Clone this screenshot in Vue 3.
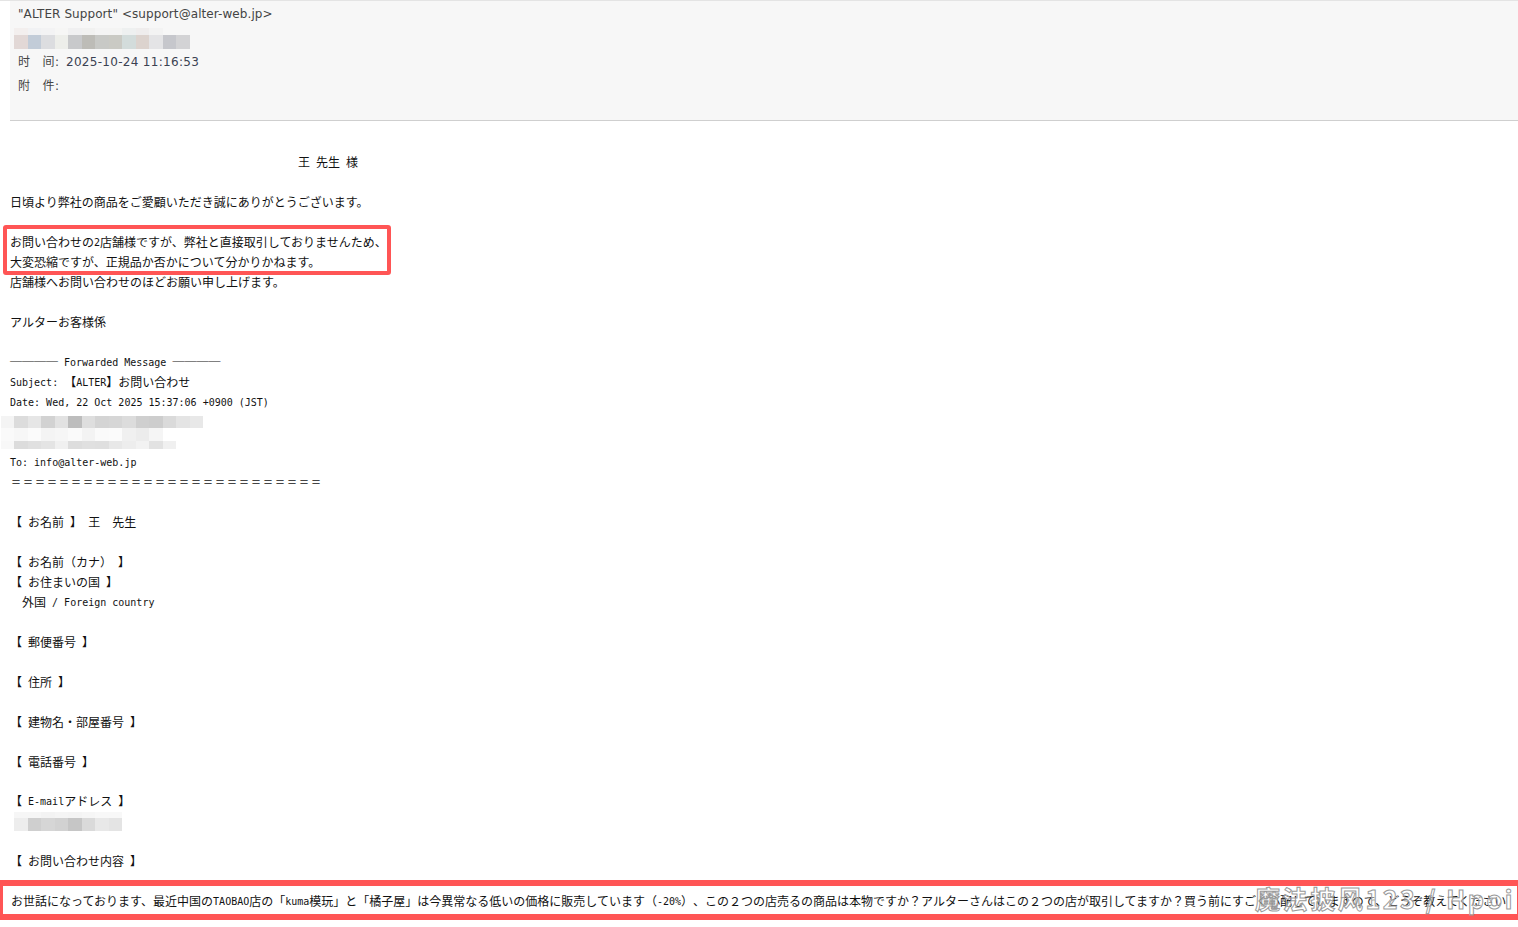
<script setup>
const mk = (s) => (s.match(/[\x00-\x7f]+|[^\x00-\x7f]+/g) || []).map((t) => ({ t, lat: /^[\x00-\x7f]/.test(t) }))

const block1 = [
  '',
  '日頃より弊社の商品をご愛顧いただき誠にありがとうございます。',
  '',
  'お問い合わせの2店舗様ですが、弊社と直接取引しておりませんため、',
  '大変恐縮ですが、正規品か否かについて分かりかねます。',
  '店舗様へお問い合わせのほどお願い申し上げます。',
  '',
  'アルターお客様係',
  '',
  '──── Forwarded Message ────',
  'Subject: 【ALTER】お問い合わせ',
  'Date: Wed, 22 Oct 2025 15:37:06 +0900 (JST)',
].map(mk)

const block2 = [
  'To: info@alter-web.jp',
  '＝'.repeat(26),
  '',
  '【 お名前 】 王　先生',
  '',
  '【 お名前（カナ） 】',
  '【 お住まいの国 】',
  '  外国 / Foreign country',
  '',
  '【 郵便番号 】',
  '',
  '【 住所 】',
  '',
  '【 建物名・部屋番号 】',
  '',
  '【 電話番号 】',
  '',
  '【 E-mailアドレス 】',
].map(mk)

const block3 = ['', '【 お問い合わせ内容 】', ''].map(mk)

const greeting = mk('王 先生 様')
const inquiry = mk(
  'お世話になっております、最近中国のTAOBAO店の「kuma模玩」と「橘子屋」は今異常なる低いの価格に販売しています（-20%）、この２つの店売るの商品は本物ですか？アルターさんはこの２つの店が取引してますか？買う前にすごく心配していますので、どうぞ教えてください'
)

const headMosaic = [
  { cls: 'r7', cells: ['#f3efee', '#f1f2f4', '#f3f3f4', '#f6f6f5', '#f0f0f1', '#f1f1f0', '#f4f4f4', '#f4f4f3', '#eef0f0', '#efeded', '#f3f3f3'] },
  { cls: 'r14', cells: ['#e2d8d6', '#c2ccd8', '#dcdde0', '#edeeea', '#c8c9cb', '#bdbcb7', '#c8c9c6', '#cacac4', '#d3dcdb', '#dcd3ce', '#e4e4e6', '#c6c7cc', '#d3d3d5'] },
]
const fromMosaic = [
  { cls: 'r12', cells: ['#f4f4f4', '#dcdcdc', '#e6e6e6', '#d2d2d2', '#e2e2e2', '#bdbdbd', '#dedede', '#d4d4d4', '#d6d6d6', '#dcdcdc', '#cfcfcf', '#cdcdcd', '#dadada', '#e4e4e4', '#e8e8e8'] },
  { cls: 'r13', cells: ['#fafafa', '#f7f7f7', '#fbfbfb', '#f4f4f4', '#f6f6f6', '#fafafa', '#f3f3f3', '#fafafa', '#fbfbfb', '#f0f0f0', '#ececec', '#f5f5f5'] },
  { cls: 'r8', cells: ['#f8f8f8', '#dcdcdc', '#e0e0e0', '#e4e4e4', '#f0f0f0', '#dddddd', '#e0e0e0', '#dfdfdf', '#e8e8e8', '#ededed', '#f2f2f2', '#e2e2e2', '#f0f0f0'] },
]
const mailMosaic = [
  { cls: 'r6', cells: ['#f6f6f6', '#f6f6f6', '#f3f3f3', '#f5f5f5', '#f4f4f4', '#f6f6f6', '#f8f8f8', '#f8f8f8'] },
  { cls: 'r13', cells: ['#ededed', '#cfcfcf', '#d6d6d6', '#d2d2d2', '#c6c6c6', '#dadada', '#e8e8e8', '#e4e4e4'] },
]
</script>

<template>
  <div class="page">
    <header class="head">
      <div class="head-row sender">"ALTER Support" &lt;support@alter-web.jp&gt;</div>
      <div class="mosaic head-mosaic">
        <div v-for="(row, i) in headMosaic" :key="i" class="m-row" :class="row.cls">
          <i v-for="(c, j) in row.cells" :key="j" :style="{ background: c }"></i>
        </div>
      </div>
      <div class="head-row"><span class="label">时&emsp;间:</span><span class="value">2025-10-24 11:16:53</span></div>
      <div class="head-row"><span class="label">附&emsp;件:</span></div>
    </header>

    <main class="mail">
      <p class="line greeting"><span v-for="(s, i) in greeting" :key="i" :class="{ lat: s.lat }">{{ s.t }}</span></p>
      <p v-for="(l, n) in block1" :key="'a' + n" class="line"><span v-for="(s, i) in l" :key="i" :class="{ lat: s.lat }">{{ s.t }}</span></p>

      <div class="mosaic from-mosaic">
        <div v-for="(row, i) in fromMosaic" :key="i" class="m-row" :class="row.cls">
          <i v-for="(c, j) in row.cells" :key="j" :style="{ background: c }"></i>
        </div>
      </div>

      <p v-for="(l, n) in block2" :key="'b' + n" class="line" :class="{ rule: n === 1, lift: n === 17 }"><span v-for="(s, i) in l" :key="i" :class="{ lat: s.lat }">{{ s.t }}</span></p>

      <div class="mosaic mail-mosaic">
        <div v-for="(row, i) in mailMosaic" :key="i" class="m-row" :class="row.cls">
          <i v-for="(c, j) in row.cells" :key="j" :style="{ background: c }"></i>
        </div>
      </div>

      <p v-for="(l, n) in block3" :key="'c' + n" class="line"><span v-for="(s, i) in l" :key="i" :class="{ lat: s.lat }">{{ s.t }}</span></p>
      <p class="line inquiry"><span v-for="(s, i) in inquiry" :key="i" :class="{ lat: s.lat }">{{ s.t }}</span></p>
    </main>

    <div class="mark mark-top"></div>
    <div class="mark mark-bottom"></div>
    <div class="watermark">魔法披风123 / Hpoi</div>
  </div>
</template>

<style scoped>
.page {
  position: relative;
  min-height: 927px;
  background: #fff;
  border-top: 1px solid #e4e4e4;
  box-sizing: border-box;
  overflow: hidden;
}
.head {
  margin-left: 10px;
  height: 118px;
  background: #f7f7f7;
  border-bottom: 1px solid #cfcfcf;
  padding: 1px 0 0 8px;
  font-family: "DejaVu Sans", "Noto Sans CJK SC", sans-serif;
  font-size: 12px;
  color: #444;
}
.head-row {
  height: 24px;
  line-height: 24px;
  white-space: pre;
}
.sender {
  letter-spacing: 0.08px;
}
.label {
  display: inline-block;
  width: 48px;
  letter-spacing: 0.3px;
}
.value {
  color: #3b4252;
  letter-spacing: 0.3px;
}
.mosaic {
  display: flex;
  flex-direction: column;
}
.m-row {
  display: flex;
}
.m-row i {
  display: block;
  width: 13.5px;
  flex: none;
}
.r6 { height: 6px; }
.r7 { height: 7px; }
.r8 { height: 8px; }
.r12 { height: 12px; }
.r13 { height: 13px; }
.r14 { height: 14px; }
.head-mosaic {
  height: 24px;
  margin-left: -4px;
  padding-top: 2px;
  box-sizing: border-box;
}
.mail {
  padding: 31px 0 0 10px;
  font-family: "Noto Sans CJK JP", sans-serif;
  font-size: 12px;
  color: #111;
  text-spacing-trim: space-all;
}
.line {
  margin: 0;
  height: 20px;
  line-height: 20px;
  white-space: pre;
}
.lat {
  font-family: "DejaVu Sans Mono", monospace;
  font-size: 10px;
  position: relative;
  top: -1px;
}
.rule {
  font-size: 10px;
  letter-spacing: 2px;
  padding-left: 1px;
}
.lift {
  margin-top: -1px;
}
.greeting {
  padding-left: 288px;
}
.from-mosaic {
  height: 40px;
  margin-left: -10px;
  padding: 4px 0 0 0.5px;
  box-sizing: border-box;
}
.mail-mosaic {
  height: 20px;
  padding: 1px 0 0 4px;
  box-sizing: border-box;
}
.inquiry {
  padding-left: 1px;
}
.mark {
  position: absolute;
  box-sizing: border-box;
  border-style: solid;
  border-color: #ff5555;
  pointer-events: none;
}
.mark-top {
  left: 3px;
  top: 224px;
  width: 388px;
  height: 50px;
  border-width: 4px;
  border-radius: 3px;
}
.mark-bottom {
  left: 0;
  top: 879px;
  width: 1518px;
  height: 40px;
  border-width: 6px 1px 6px 3px;
}
.watermark {
  position: absolute;
  left: 1255px;
  top: 882px;
  font-family: "Noto Sans CJK SC", sans-serif;
  font-size: 25px;
  line-height: 30px;
  letter-spacing: 2.6px;
  font-weight: 700;
  color: rgba(255, 255, 255, 0.5);
  -webkit-text-stroke: 1px #9a9a9a;
  white-space: pre;
}
</style>
